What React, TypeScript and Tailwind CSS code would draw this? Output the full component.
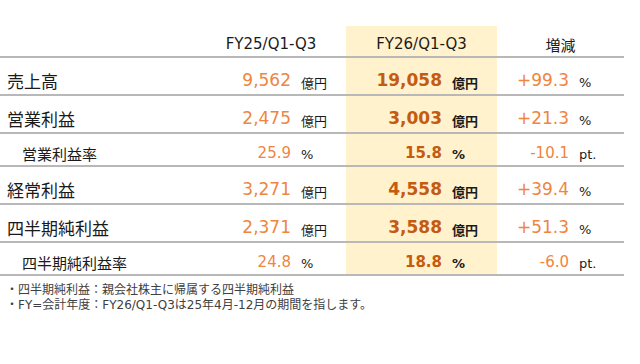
import React from "react";

const num = "font-['DejaVu_Sans','Noto_Sans_CJK_JP',sans-serif]";
const jp = "font-['Noto_Sans_CJK_JP',sans-serif]";

type Row = {
  label: string;
  sub?: boolean;
  a: string;
  b: string;
  c: string;
  unit: string;
  cunit: string;
};

const rows: Row[] = [
  { label: "売上高", a: "9,562", b: "19,058", c: "+99.3", unit: "億円", cunit: "%" },
  { label: "営業利益", a: "2,475", b: "3,003", c: "+21.3", unit: "億円", cunit: "%" },
  { label: "営業利益率", sub: true, a: "25.9", b: "15.8", c: "-10.1", unit: "%", cunit: "pt." },
  { label: "経常利益", a: "3,271", b: "4,558", c: "+39.4", unit: "億円", cunit: "%" },
  { label: "四半期純利益", a: "2,371", b: "3,588", c: "+51.3", unit: "億円", cunit: "%" },
  { label: "四半期純利益率", sub: true, a: "24.8", b: "18.8", c: "-6.0", unit: "%", cunit: "pt." },
];

function Unit({ u, bold }: { u: string; bold?: boolean }) {
  const isJp = u === "億円";
  return (
    <span
      className={`w-[55px] pl-[10px] text-[13px] leading-none text-[#1a1a1a] ${isJp ? jp : num} ${bold ? "font-bold" : ""}`}
    >
      {u}
    </span>
  );
}

export default function App() {
  return (
    <div className="w-[640px] h-[364px] bg-white pt-[26px] text-[#1a1a1a]">
      <div className="w-[624px]">
        {/* header */}
        <div className="grid grid-cols-[196px_150px_151px_127px] h-[32px] border-b-2 border-[#b8b8b8]">
          <div />
          <div className={`flex items-end justify-center pb-[4px] text-[15px] leading-none ${num}`}>FY25/Q1-Q3</div>
          <div className={`flex items-end justify-center pb-[4px] text-[15px] leading-none bg-[#fff2cc] ${num}`}>FY26/Q1-Q3</div>
          <div className={`flex items-end justify-center pb-[4px] text-[15px] leading-none ${jp}`}>増減</div>
        </div>
        {rows.map((r, i) => {
          const h = r.sub ? "h-[33px]" : "h-[38px]";
          const vs = r.sub ? "text-[15px]" : "text-[17px]";
          const pb = r.sub ? "pb-[4px]" : "pb-[5px]";
          return (
            <div
              key={i}
              className={`grid grid-cols-[196px_150px_151px_127px] ${h} border-b-2 border-[#b8b8b8]`}
            >
              <div
                className={`flex items-end ${pb} ${r.sub ? "pl-[22px] text-[15px]" : "pl-[7px] text-[17px]"} leading-none ${jp}`}
              >
                {r.label}
              </div>
              <div className={`flex items-end justify-end ${pb}`}>
                <span className={`${vs} leading-none text-[#ef8540] ${num}`}>{r.a}</span>
                <Unit u={r.unit} />
              </div>
              <div className={`flex items-end justify-end ${pb} bg-[#fff2cc]`}>
                <span className={`${vs} leading-none font-bold text-[#c55a11] ${num}`}>{r.b}</span>
                <Unit u={r.unit} bold />
              </div>
              <div className={`flex items-end justify-end ${pb}`}>
                <span className={`${vs} leading-none text-[#ef8540] ${num}`}>{r.c}</span>
                <Unit u={r.cunit} />
              </div>
            </div>
          );
        })}
      </div>
      <div className={`pl-[6px] pt-[7px] text-[12px] leading-[15px] text-[#404040] ${num}`}>
        <div>・四半期純利益：親会社株主に帰属する四半期純利益</div>
        <div>・FY=会計年度：FY26/Q1-Q3は25年4月-12月の期間を指します。</div>
      </div>
    </div>
  );
}
